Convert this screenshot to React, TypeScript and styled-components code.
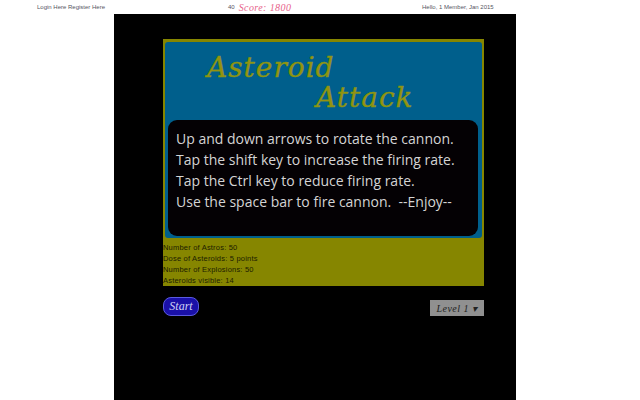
import React from 'react';
import styled, { createGlobalStyle } from 'styled-components';

const GlobalStyle = createGlobalStyle`
    html, body {
        margin: 0;
        padding: 0;
        background: #ffffff;
        overflow: hidden;
    }
`;

const Page = styled.div`
    width: 640px;
    height: 400px;
    display: flex;
    flex-direction: column;
    font-family: "Liberation Sans", sans-serif;
`;

const TopBar = styled.div`
    height: 14px;
    display: grid;
    grid-template-columns: 228px 190px 1fr;
    align-items: center;
    overflow: hidden;
`;

const TopLinks = styled.div`
    padding-left: 37px;
    font-size: 6px;
    color: #55555f;
    white-space: nowrap;
`;

const ScoreBox = styled.div`
    display: flex;
    align-items: center;
    gap: 4px;
    font-size: 6px;
    color: #55555f;
`;

const Score = styled.span`
    font-family: "Liberation Serif", serif;
    font-style: italic;
    font-size: 10px;
    letter-spacing: 0.4px;
    color: #e8648c;
`;

const Credit = styled.div`
    padding-left: 4px;
    font-size: 6px;
    color: #55555f;
    white-space: nowrap;
`;

const Stage = styled.div`
    width: 402px;
    height: 386px;
    margin-left: 114px;
    padding: 25px 32px 0 49px;
    box-sizing: border-box;
    background: #000000;
`;

const GamePanel = styled.div`
    width: 321px;
    height: 247px;
    padding: 3px 2px 0;
    box-sizing: border-box;
    background: #868600;
`;

const BluePanel = styled.div`
    height: 196px;
    padding: 11px 4px 2px 3px;
    box-sizing: border-box;
    display: flex;
    flex-direction: column;
    border-radius: 3px;
    background: #005f8c;
`;

const TitleBlock = styled.div`
    height: 67px;
    font-family: "DejaVu Serif", serif;
    font-style: italic;
    font-size: 28px;
    line-height: 30px;
    letter-spacing: 1px;
    color: #94920f;
    -webkit-text-stroke: 0.4px #7f9a1c;
`;

const TitleLine = styled.div<{ $indent: number }>`
    padding-left: ${(p) => p.$indent}px;
    white-space: nowrap;
`;

const InstructionBox = styled.div`
    flex: 1;
    padding: 8px 8px 0;
    border-radius: 9px;
    background: #040104;
    color: #d4d4d4;
    font-family: "Open Sans", sans-serif;
    font-size: 14px;
    line-height: 21px;
    white-space: pre;
`;

const Rules = styled.div`
    margin-left: -2px;
    padding-top: 4px;
    font-size: 7.5px;
    line-height: 11px;
    letter-spacing: 0.2px;
    color: #1c1c00;
    white-space: nowrap;
`;

const Controls = styled.div`
    width: 321px;
    display: flex;
    justify-content: space-between;
    align-items: flex-start;
    padding-top: 11px;
`;

const StartButton = styled.button`
    width: 36px;
    height: 19px;
    padding: 0;
    border: 1px solid #5a5ae0;
    border-radius: 8px;
    background: #1a10a8;
    color: #d0d0f4;
    font-family: "Liberation Serif", serif;
    font-style: italic;
    font-size: 12px;
`;

const LevelSelect = styled.div`
    width: 54px;
    height: 16px;
    margin-top: 3px;
    display: flex;
    align-items: center;
    justify-content: center;
    background: #909090;
    color: #222222;
    font-family: "Liberation Serif", serif;
    font-style: italic;
    font-size: 10px;
    letter-spacing: 0.5px;
`;

const lines = [
    'Up and down arrows to rotate the cannon.',
    'Tap the shift key to increase the firing rate.',
    'Tap the Ctrl key to reduce firing rate.',
    'Use the space bar to fire cannon.  --Enjoy--',
];

const rules = [
    'Number of Astros: 50',
    'Dose of Asteroids: 5 points',
    'Number of Explosions: 50',
    'Asteroids visible: 14',
];

export default function App() {
    return (
        <Page>
            <GlobalStyle />
            <TopBar>
                <TopLinks>Login Here Register Here</TopLinks>
                <ScoreBox>
                    <span>40</span>
                    <Score>Score: 1800</Score>
                </ScoreBox>
                <Credit>Hello, 1 Member, Jan 2015</Credit>
            </TopBar>
            <Stage>
                <GamePanel>
                    <BluePanel>
                        <TitleBlock>
                            <TitleLine $indent={39}>Asteroid</TitleLine>
                            <TitleLine $indent={148}>Attack</TitleLine>
                        </TitleBlock>
                        <InstructionBox>
                            {lines.map((line) => (
                                <div key={line}>{line}</div>
                            ))}
                        </InstructionBox>
                    </BluePanel>
                    <Rules>
                        {rules.map((rule) => (
                            <div key={rule}>{rule}</div>
                        ))}
                    </Rules>
                </GamePanel>
                <Controls>
                    <StartButton>Start</StartButton>
                    <LevelSelect>Level 1 ▾</LevelSelect>
                </Controls>
            </Stage>
        </Page>
    );
}
